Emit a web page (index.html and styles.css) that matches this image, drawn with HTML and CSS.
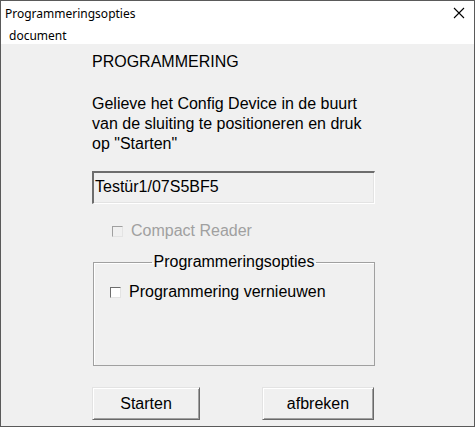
FILE: index.html
```html
<!DOCTYPE html>
<html>
    <head>
        <title>Programmeringsopties</title>
        <meta charset="UTF-8">
        <link rel="stylesheet" href="styles.css">
    </head>
    <body>
        <div class="window">
            <!-- Titelbalk -->
            <div class="titlebar">
                <span class="title">Programmeringsopties</span>
                <span class="close">
                    <svg width="12" height="12" viewBox="0 0 12 12">
                        <path d="M1 1 L11 11 M11 1 L1 11" stroke="#000" stroke-width="1.1"/>
                    </svg>
                </span>
            </div>
            <div class="menubar">
                <span class="menu-item">document</span>
            </div>

            <div class="content">
                <div class="heading">PROGRAMMERING</div>
                <p class="instruction">Gelieve het Config Device in de buurt van de sluiting te positioneren en druk op "Starten"</p>

                <div class="textbox">Testür1/07S5BF5</div>

                <label class="check disabled">
                    <span class="box"></span>
                    <span>Compact Reader</span>
                </label>

                <fieldset class="group">
                    <legend>Programmeringsopties</legend>
                    <label class="check">
                        <span class="box"></span>
                        <span>Programmering vernieuwen</span>
                    </label>
                </fieldset>

                <div class="buttons">
                    <button class="btn btn-start">Starten</button>
                    <button class="btn btn-cancel">afbreken</button>
                </div>
            </div>
        </div>
    </body>
</html>
```

FILE: styles.css
```css
html, body {
    margin: 0;
    padding: 0;
}

body {
    font-family: "Liberation Sans", Arial, sans-serif;
    width: 475px;
    height: 427px;
    overflow: hidden;
}

.window {
    box-sizing: border-box;
    width: 475px;
    height: 427px;
    border: 1px solid #5a5a5a;
    display: flex;
    flex-direction: column;
    background: #f0f0f0;
}

.titlebar {
    height: 25px;
    background: #fff;
    display: flex;
    align-items: center;
    justify-content: space-between;
    padding: 0 8px 0 4px;
    font-family: "Noto Sans", "Open Sans", sans-serif;
    font-size: 12px;
    color: #000;
}

.title {
    margin-top: -1px;
}

.close {
    display: flex;
    width: 12px;
    height: 12px;
    margin-right: 1px;
    margin-top: -1px;
}

.menubar {
    height: 18px;
    background: #fff;
    display: flex;
    align-items: center;
    padding-left: 8px;
    font-family: "Noto Sans", "Open Sans", sans-serif;
    font-size: 12px;
}

.content {
    flex: 1;
    padding: 8px 0 0 91px;
    font-size: 16px;
    line-height: 20px;
    color: #000;
}

.heading {
    margin: 0;
}

.instruction {
    margin: 22px 0 0 0;
    width: 285px;
}

.textbox {
    box-sizing: border-box;
    width: 283px;
    height: 33px;
    margin-top: 17px;
    padding: 4px 0 0 1px;
    border-top: 2px solid #6d6d6d;
    border-left: 2px solid #6d6d6d;
    border-right: 1px solid #fff;
    border-bottom: 1px solid #fff;
    box-shadow: inset -1px -1px 0 #e3e3e3;
}

.check {
    display: flex;
    align-items: center;
    gap: 8px;
}

.check .box {
    box-sizing: border-box;
    width: 11px;
    height: 11px;
    background: #fff;
    border-top: 1px solid #6d6d6d;
    border-left: 1px solid #6d6d6d;
    border-right: 1px solid #e3e3e3;
    border-bottom: 1px solid #e3e3e3;
}

.check.disabled {
    margin: 17px 0 0 20px;
    color: #a0a0a0;
}

.check.disabled .box {
    background: #f0f0f0;
    border-top-color: #a0a0a0;
    border-left-color: #a0a0a0;
}

.group {
    box-sizing: border-box;
    width: 282px;
    height: 114px;
    margin: 11px 0 0 1px;
    padding: 10px 0 0 0;
    border: 1px solid #a0a0a0;
    box-shadow: inset 1px 1px 0 #fff;
}

.group legend {
    margin: 0 auto;
    padding: 0 2px;
}

.group .check {
    margin-left: 16px;
}

.buttons {
    display: flex;
    gap: 62px;
    margin: 21px 0 0 0;
}

.btn {
    box-sizing: border-box;
    height: 33px;
    padding: 0;
    font-family: "Liberation Sans", Arial, sans-serif;
    font-size: 16px;
    color: #000;
    background: #f0f0f0;
    border-top: 1px solid #e3e3e3;
    border-left: 1px solid #e3e3e3;
    border-right: 1px solid #696969;
    border-bottom: 1px solid #696969;
    box-shadow: inset 1px 1px 0 #fff, inset -1px -1px 0 #a0a0a0;
}

.btn-start {
    width: 108px;
}

.btn-cancel {
    width: 112px;
}
```
